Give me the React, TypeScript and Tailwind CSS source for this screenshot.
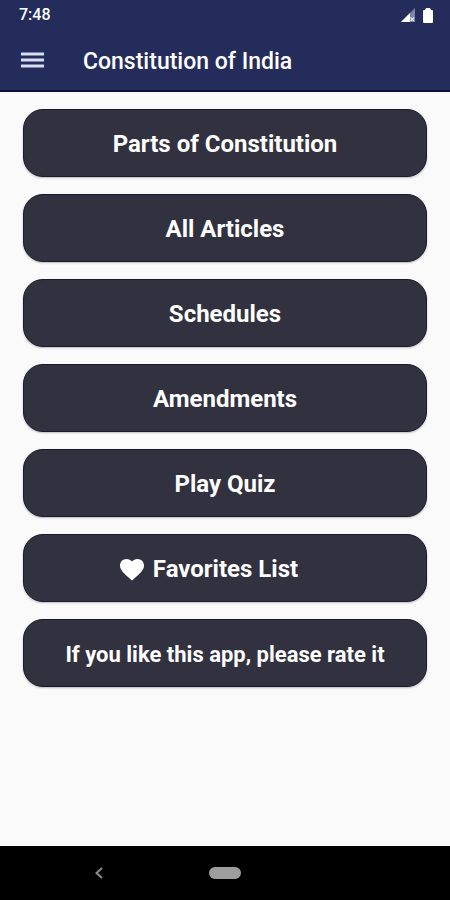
import React from "react";

type MenuItem = { label: string; icon?: boolean; small?: boolean };

const items: MenuItem[] = [
  { label: "Parts of Constitution" },
  { label: "All Articles" },
  { label: "Schedules" },
  { label: "Amendments" },
  { label: "Play Quiz" },
  { label: "Favorites List", icon: true },
  { label: "If you like this app, please rate it", small: true },
];

function StatusBar() {
  return (
    <div className="flex h-[30px] items-center justify-between pr-[17px] pl-[19px]">
      <span className="text-[16px] leading-5 font-medium">7:48</span>
      <div className="flex items-center gap-2">
        <svg width="15" height="14" viewBox="0 0 15 14" aria-hidden="true">
          <path d="M15 0V14H1Z" fill="#7c82a8" />
          <path d="M10 5V14H1Z" fill="#fff" />
          <path d="M10.5 9.5l3.5 3.5M14 9.5L10.5 13" stroke="#e6e8f4" strokeWidth="1.2" />
        </svg>
        <svg width="10" height="15" viewBox="0 0 10 15" aria-hidden="true">
          <path d="M3 0h4l1 2h1a1 1 0 0 1 1 1v11a1 1 0 0 1-1 1H1a1 1 0 0 1-1-1V3a1 1 0 0 1 1-1h1z" fill="#fff" />
        </svg>
      </div>
    </div>
  );
}

function Heart() {
  return (
    <svg width="26" height="24" viewBox="0 0 26 24" aria-hidden="true">
      <path
        d="M13 23.500L11.300 22C5 16.500 1 13 1 8.500C1 4.800 3.900 2 7.600 2C9.700 2 11.700 3 13 4.500C14.300 3 16.300 2 18.400 2C22.100 2 25 4.800 25 8.500C25 13 21 16.500 14.700 22Z"
        fill="#fff"
      />
    </svg>
  );
}

export default function App() {
  return (
    <div className="flex min-h-screen flex-col bg-[#fafafa] font-[Roboto,sans-serif]">
      <header className="border-b-2 border-[#0c0f42] bg-[#242c5c] text-white">
        <StatusBar />
        <div className="flex h-[60px] items-center gap-[39px] px-[21px]">
          <button type="button" aria-label="Open menu" className="block">
            <svg width="23" height="17" viewBox="0 0 23 17" aria-hidden="true">
              <path d="M0 2h23M0 8h23M0 14h23" stroke="#d8dcf0" strokeWidth="2.8" />
            </svg>
          </button>
          <h1 className="pt-1 text-[23px] leading-8 font-medium">Constitution of India</h1>
        </div>
      </header>

      <main className="flex flex-1 flex-col gap-[17px] px-[23px] pt-[17px]">
        {items.map((item) => (
          <button
            key={item.label}
            type="button"
            className={
              "flex h-[68px] w-full items-center justify-center gap-2 rounded-[20px] border border-[#1b1a2c] bg-[#31313f] pt-[2px] font-bold text-white shadow-[0_1px_2px_rgba(0,0,0,0.25)] " +
              (item.small ? "text-[22px]" : "text-[24px]") +
              (item.icon ? " pr-[33px]" : "")
            }
          >
            {item.icon && <Heart />}
            {item.label}
          </button>
        ))}
      </main>

      <nav className="grid h-[54px] grid-cols-[1fr_auto_1fr] items-center bg-black" aria-label="System navigation">
        <button type="button" aria-label="Back" className="mr-[106px] justify-self-end">
          <svg width="8" height="12" viewBox="0 0 8 12" fill="none" aria-hidden="true">
            <path d="M7 1L1.500 6L7 11" stroke="#8c8c8c" strokeWidth="2" />
          </svg>
        </button>
        <button type="button" aria-label="Home" className="h-3 w-8 rounded-full bg-[#9e9e9e]" />
      </nav>
    </div>
  );
}
